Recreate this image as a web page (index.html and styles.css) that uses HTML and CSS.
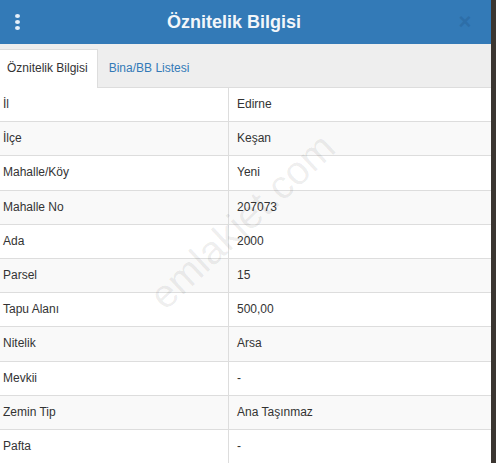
FILE: index.html
```html
<!DOCTYPE html>
<html lang="tr">
<head>
    <meta charset="UTF-8">
    <meta name="viewport" content="width=device-width, initial-scale=1.0">
    <title>Öznitelik Bilgisi</title>
    <link rel="stylesheet" href="styles.css">
</head>
<body>
    <div class="panel">
        <!-- Header -->
        <header class="panel-header">
            <span class="menu-dots"><i></i><i></i><i></i></span>
            <h1>Öznitelik Bilgisi</h1>
            <span class="close">&times;</span>
        </header>

        <!-- Tabs -->
        <ul class="tabs">
            <li class="active">Öznitelik Bilgisi</li>
            <li>Bina/BB Listesi</li>
        </ul>

        <!-- Attribute table -->
        <div class="table-wrap">
            <table class="attr-table">
                <tr><td>İl</td><td>Edirne</td></tr>
                <tr><td>İlçe</td><td>Keşan</td></tr>
                <tr><td>Mahalle/Köy</td><td>Yeni</td></tr>
                <tr><td>Mahalle No</td><td>207073</td></tr>
                <tr><td>Ada</td><td>2000</td></tr>
                <tr><td>Parsel</td><td>15</td></tr>
                <tr><td>Tapu Alanı</td><td>500,00</td></tr>
                <tr><td>Nitelik</td><td>Arsa</td></tr>
                <tr><td>Mevkii</td><td>-</td></tr>
                <tr><td>Zemin Tip</td><td>Ana Taşınmaz</td></tr>
                <tr><td>Pafta</td><td>-</td></tr>
            </table>
            <div class="watermark">emlakjet.com</div>
        </div>
    </div>
</body>
</html>
```

FILE: styles.css
```css
/* General */
body {
    margin: 0;
    padding: 0;
    background-color: #3b3631;
    font-family: "Liberation Sans", Arial, sans-serif;
    color: #333;
    overflow: hidden;
}

.panel {
    width: 491px;
    height: 463px;
    background-color: #fff;
    overflow: hidden;
}

/* Header */
.panel-header {
    height: 44px;
    background-color: #337ab7;
    display: flex;
    align-items: center;
}

.panel-header h1 {
    flex: 1;
    margin: 0;
    text-align: center;
    font-size: 18px;
    font-weight: bold;
    color: #f2f6fa;
    padding-right: 6px;
}

.menu-dots {
    display: flex;
    flex-direction: column;
    gap: 2px;
    margin-left: 15px;
    width: 5px;
}

.menu-dots i {
    display: block;
    width: 5px;
    height: 4px;
    border-radius: 50%;
    background-color: #e6f0fa;
}

.close {
    width: 22px;
    margin-right: 15px;
    font-size: 22px;
    font-weight: bold;
    color: #2d6ea8;
    text-align: center;
}

/* Tabs */
.tabs {
    list-style: none;
    margin: 0;
    padding: 5px 0 0 0;
    height: 38px;
    display: flex;
    background-color: #eee;
    border-bottom: 1px solid #ddd;
}

.tabs li {
    padding: 0 8px 0 11px;
    line-height: 38px;
    font-size: 12px;
    color: #337ab7;
}

.tabs li.active {
    padding: 0 9px 0 7px;
    background-color: #fff;
    color: #333;
    border-right: 1px solid #ddd;
    border-top: 1px solid #ddd;
    margin-bottom: -1px;
    line-height: 37px;
    height: 38px;
}

/* Table */
.table-wrap {
    position: relative;
}

.attr-table {
    width: 100%;
    border-collapse: collapse;
    font-size: 12px;
}

.attr-table td {
    padding: 8px 8px;
    line-height: 17.2px;
    border-bottom: 1px solid #ddd;
    text-align: left;
}

.attr-table td:first-child {
    width: 217px;
    padding-left: 3px;
    border-right: 1px solid #ddd;
}

.attr-table tr:nth-child(even) {
    background-color: #f9f9f9;
}

.watermark {
    position: absolute;
    left: 124px;
    top: 110px;
    transform: rotate(-43deg);
    font-size: 40px;
    line-height: 46px;
    color: rgba(0, 0, 0, 0.07);
    pointer-events: none;
    white-space: nowrap;
}
```
